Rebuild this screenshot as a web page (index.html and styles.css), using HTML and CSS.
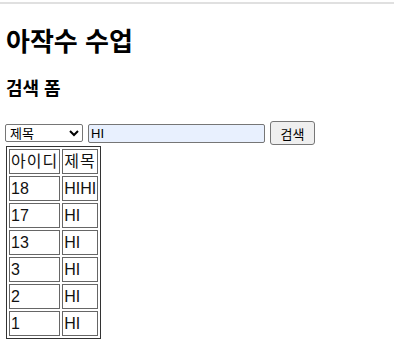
FILE: index.html
```html
<!DOCTYPE html>
<html lang="ko">

<head>
    <meta charset="UTF-8">
    <meta name="viewport" content="width=device-width, initial-scale=1.0">
    <title>아작수 수업</title>
    <link rel="stylesheet" href="styles.css">
</head>

<body>
    <div class="topline"></div>
    <div class="page">
        <h1>아작수 수업</h1>
        <h2>검색 폼</h2>

        <form class="search-form">
            <select class="search-type">
                <option>제목</option>
                <option>내용</option>
            </select>
            <input class="search-input" type="text" value="HI">
            <button type="button" class="search-btn">검색</button>
        </form>

        <table class="board">
            <tr class="head">
                <td>아이디</td>
                <td>제목</td>
            </tr>
            <tr>
                <td>18</td>
                <td>HIHI</td>
            </tr>
            <tr>
                <td>17</td>
                <td>HI</td>
            </tr>
            <tr>
                <td>13</td>
                <td>HI</td>
            </tr>
            <tr>
                <td>3</td>
                <td>HI</td>
            </tr>
            <tr>
                <td>2</td>
                <td>HI</td>
            </tr>
            <tr>
                <td>1</td>
                <td>HI</td>
            </tr>
        </table>
    </div>
</body>

</html>
```

FILE: styles.css
```css
* {
    font-family: 'Liberation Sans', 'Noto Sans CJK KR', sans-serif;
}

body {
    margin: 0;
}

.topline {
    height: 2px;
    margin-top: 2px;
    background-color: #e0e0e0;
}

.page {
    padding: 0 6px;
}

h1 {
    font-size: 26px;
    margin: 20px 0 0;
    line-height: 36px;
}

h2 {
    font-size: 18px;
    margin: 15px 0 0;
    line-height: 28px;
}

.search-form {
    margin: 18px 0 0 -1px;
    display: flex;
    align-items: center;
    gap: 5px;
}

.search-type {
    width: 78px;
    height: 18px;
    font-size: 13px;
    padding: 0;
    border: 1px solid #767676;
    border-radius: 2px;
    background-color: #fff;
}

.search-input {
    width: 171px;
    height: 17px;
    padding: 0 2px;
    font-size: 13px;
    border: 1px solid #767676;
    border-radius: 2px;
    background-color: #e8f0fe;
}

.search-btn {
    height: 24px;
    width: 45px;
    font-size: 13px;
    padding: 0;
    border: 1px solid #767676;
    border-radius: 3px;
    background-color: #efefef;
}

.board {
    border: 1px solid #333;
    border-spacing: 2px;
    margin-top: 1px;
}

.board td {
    border: 1px solid #666;
    padding: 1px;
    font-size: 16px;
    line-height: 21px;
    color: #111;
}

.head td {
    letter-spacing: 1px;
}
```
